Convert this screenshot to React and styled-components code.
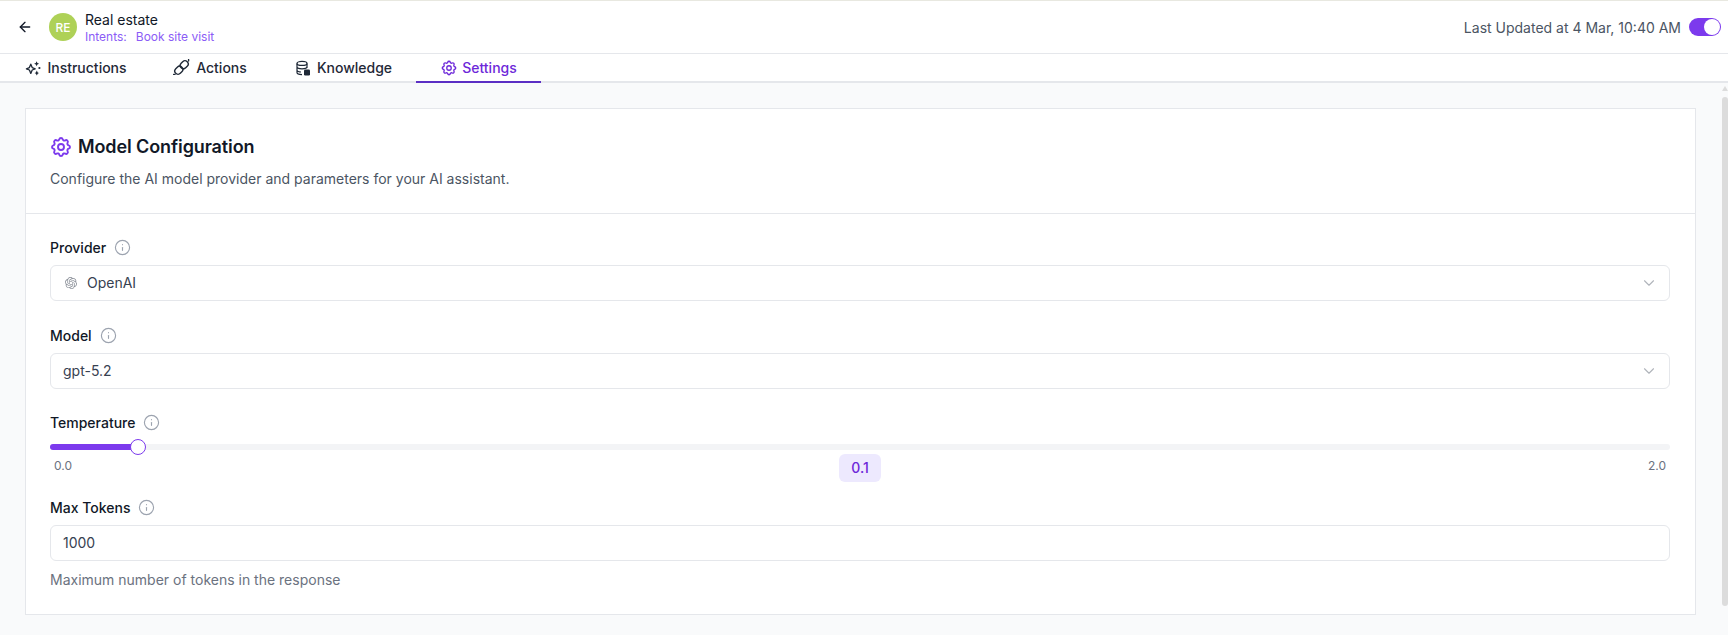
import React from "react";
import styled, { createGlobalStyle } from "styled-components";
import { TbSettings } from "react-icons/tb";
import { SiOpenai } from "react-icons/si";
import { ArrowLeft, ChevronDown, Info } from "lucide-react";

const Global = createGlobalStyle`
  html, body { margin: 0; padding: 0; height: 100%; background: #fff; overflow: hidden; }
  body { font-family: Inter, "Liberation Sans", sans-serif; color: #111827; }
  * { box-sizing: border-box; }
`;

const Page = styled.div`
  height: 635px;
  display: flex;
  flex-direction: column;
  border-top: 1px solid #e8e8e0;
`;

const TopBar = styled.header`
  height: 53px;
  flex: none;
  display: flex;
  align-items: center;
  justify-content: space-between;
  padding: 0 7px 0 17px;
  border-bottom: 1px solid #e5e7eb;
`;

const TopLeft = styled.div`
  display: flex;
  align-items: center;
`;

const BackButton = styled.button`
  border: 0;
  background: none;
  padding: 0;
  width: 16px;
  height: 16px;
  display: flex;
  color: #111827;
  margin-right: 16px;
`;

const Avatar = styled.div`
  width: 28px;
  height: 28px;
  border-radius: 50%;
  background: #aed157;
  color: #fff;
  font-size: 12px;
  font-weight: 500;
  display: flex;
  align-items: center;
  justify-content: center;
  margin-right: 8px;
`;

const TitleStack = styled.div`
  display: flex;
  flex-direction: column;
`;

const Title = styled.div`
  font-size: 14px;
  line-height: 19px;
  color: #111827;
`;

const Intents = styled.div`
  font-size: 12px;
  line-height: 16px;
  color: #8b5cf6;
  display: flex;
  gap: 9px;
`;

const TopRight = styled.div`
  display: flex;
  align-items: center;
  gap: 8px;
`;

const Updated = styled.span`
  font-size: 14px;
  color: #4b5563;
`;

const Toggle = styled.div`
  width: 32px;
  height: 18px;
  border-radius: 9px;
  background: #7c3aed;
  display: flex;
  justify-content: flex-end;
  padding: 1px;
`;

const ToggleKnob = styled.div`
  width: 16px;
  height: 16px;
  border-radius: 50%;
  background: #fff;
`;

const Tabs = styled.nav`
  height: 29px;
  flex: none;
  display: flex;
  border-bottom: 2px solid #e5e7eb;
`;

const Tab = styled.div`
  width: ${(p) => p.$w}px;
  height: 29px;
  display: flex;
  align-items: center;
  justify-content: center;
  gap: ${(p) => p.$gap ?? 6}px;
  font-size: 14px;
  font-weight: 500;
  color: ${(p) => (p.$active ? "#6d28d9" : "#1f2937")};
  border-bottom: 2px solid ${(p) => (p.$active ? "#5b2fc4" : "transparent")};
  padding-left: ${(p) => p.$pl ?? 0}px;
`;

const ScrollArea = styled.div`
  position: relative;
  flex: 1;
  min-height: 0;
`;

const Scroll = styled.main`
  height: 100%;
  background: #f9fafb;
  overflow-y: auto;
  padding: 25px 32px 39px 25px;
  &::-webkit-scrollbar { display: none; }
`;

const Rail = styled.div`
  position: absolute;
  top: 0;
  right: 0;
  width: 7px;
  display: flex;
  flex-direction: column;
  align-items: center;
  padding-top: 3px;
`;

const RailArrow = styled.div`
  width: 0;
  height: 0;
  border-left: 3px solid transparent;
  border-right: 3px solid transparent;
  border-bottom: 5px solid #dcdcdc;
`;

const RailThumb = styled.div`
  width: 6px;
  height: 509px;
  margin-top: 6px;
  border-radius: 3px;
  background: #dcdcdc;
`;

const Card = styled.section`
  background: #fff;
  border: 1px solid #e5e7eb;
`;

const CardHead = styled.div`
  height: 105px;
  padding: 26px 24px 0;
  border-bottom: 1px solid #e5e7eb;
`;

const CardTitle = styled.h2`
  margin: 0;
  display: flex;
  align-items: center;
  gap: 5px;
  font-size: 18px;
  line-height: 24px;
  font-weight: 600;
  letter-spacing: -0.1px;
  color: #111827;
  svg { color: #7c3aed; margin-left: -1px; }
`;

const CardDesc = styled.p`
  margin: 10px 0 0;
  font-size: 14px;
  line-height: 20px;
  color: #4b5563;
`;

const CardBody = styled.div`
  padding: 24px 25px 24px 24px;
`;

const Field = styled.div`
  margin-bottom: ${(p) => p.$mb || 0}px;
`;

const Label = styled.div`
  display: flex;
  align-items: center;
  gap: 8px;
  height: 20px;
  padding-bottom: 2px;
  margin-bottom: ${(p) => p.$mb ?? 7}px;
  font-size: 14px;
  font-weight: 500;
  color: #111827;
  svg { color: #9ca3af; }
`;

const Control = styled.div`
  height: 36px;
  border: 1px solid #e5e7eb;
  border-radius: 6px;
  display: flex;
  align-items: center;
  justify-content: space-between;
  padding: 0 12px 1px;
  font-size: 14px;
  color: #374151;
  background: #fff;
`;

const ControlValue = styled.span`
  display: flex;
  align-items: center;
  svg { color: #8a8f98; margin: 0 10px 0 2px; }
`;

const Chevron = styled(ChevronDown)`
  color: #b0b4bb;
  margin-right: -1px;
`;

const Track = styled.div`
  position: relative;
  height: 6px;
  border-radius: 3px;
  background: #f3f4f6;
`;

const Fill = styled.div`
  height: 100%;
  border-radius: 3px;
  background: #7c3aed;
`;

const Thumb = styled.div`
  position: absolute;
  top: -5px;
  width: 16px;
  height: 16px;
  margin-left: -8px;
  border-radius: 50%;
  background: #fff;
  border: 1.5px solid #7c3aed;
`;

const Scale = styled.div`
  display: flex;
  justify-content: space-between;
  align-items: flex-start;
  padding: 4px 4px 0;
  font-size: 12px;
  line-height: 20px;
  color: #6b7280;
`;

const ScaleEnd = styled.span`
  padding-top: 2px;
`;

const ValueBadge = styled.span`
  width: 42px;
  height: 28px;
  border-radius: 6px;
  background: #ede9fe;
  color: #6d28d9;
  font-size: 14px;
  font-weight: 500;
  display: flex;
  align-items: center;
  justify-content: center;
`;

const Helper = styled.p`
  margin: 9px 0 0;
  font-size: 14px;
  line-height: 20px;
  color: #6b7280;
`;

const IconInstructions = () => (
  <svg width="16" height="16" viewBox="0 0 16 16" fill="none" stroke="currentColor" strokeWidth="1.3" strokeLinejoin="round">
    <path d="M5.8 4.2 7.2 7.6l3 1.2-3 1.2-1.4 3.4L4.4 10l-3-1.2 3-1.2z" />
    <path d="M11.6 1.2l.8 1.7 1.7.8-1.7.8-.8 1.7-.8-1.7-1.7-.8 1.7-.8z" fill="currentColor" stroke="none" />
    <path d="M11.8 10.6l.9 1.8 1.3.7-1.3.7-.9 1.8-.9-1.8-1.3-.7 1.3-.7z" fill="currentColor" stroke="none" />
    <circle cx="14.4" cy="8" r="1.1" fill="currentColor" stroke="none" />
  </svg>
);

const IconActions = () => (
  <svg width="17" height="17" viewBox="0 0 17 17" fill="none" stroke="currentColor" strokeWidth="1.4" strokeLinecap="round">
    <rect x="1.5" y="8" width="8.6" height="6.4" rx="3.2" transform="rotate(-45 5.8 11.2)" />
    <rect x="6.9" y="2.6" width="8.6" height="6.4" rx="3.2" transform="rotate(-45 11.2 5.8)" />
    <path d="M15.6 0.6v1.4M0.6 15.4H2" />
  </svg>
);

const IconKnowledge = () => (
  <svg width="16" height="16" viewBox="0 0 16 16" fill="none" stroke="currentColor" strokeWidth="1.2">
    <ellipse cx="7" cy="3.4" rx="5" ry="2" />
    <path d="M2 3.4v9.2c0 1.1 2.2 2 5 2M2 6.8c0 1.1 2.2 2 5 2s5-.9 5-2M2 10c0 1.1 2.2 2 4 2M12 3.4V8" />
    <rect x="9" y="9.5" width="6" height="6" rx="1.2" fill="currentColor" stroke="none" />
  </svg>
);

const InfoIcon = () => <Info size={17} strokeWidth={1.6} />;

export default function App() {
  return (
    <>
      <Global />
      <Page>
        <TopBar>
          <TopLeft>
            <BackButton><ArrowLeft size={16} strokeWidth={2} /></BackButton>
            <Avatar>RE</Avatar>
            <TitleStack>
              <Title>Real estate</Title>
              <Intents><span>Intents:</span><span>Book site visit</span></Intents>
            </TitleStack>
          </TopLeft>
          <TopRight>
            <Updated>Last Updated at 4 Mar, 10:40 AM</Updated>
            <Toggle><ToggleKnob /></Toggle>
          </TopRight>
        </TopBar>
        <Tabs>
          <Tab $w={150} $pl={2}><IconInstructions />Instructions</Tab>
          <Tab $w={120}><IconActions />Actions</Tab>
          <Tab $w={146} $pl={1}><IconKnowledge />Knowledge</Tab>
          <Tab $w={125} $active $gap={4}><TbSettings size={18} strokeWidth={1.75} />Settings</Tab>
        </Tabs>
        <ScrollArea>
          <Scroll>
            <Card>
              <CardHead>
                <CardTitle><TbSettings size={24} strokeWidth={1.9} />Model Configuration</CardTitle>
                <CardDesc>Configure the AI model provider and parameters for your AI assistant.</CardDesc>
              </CardHead>
              <CardBody>
                <Field $mb={25}>
                  <Label>Provider <InfoIcon /></Label>
                  <Control>
                    <ControlValue><SiOpenai size={12} />OpenAI</ControlValue>
                    <Chevron size={18} strokeWidth={1.5} />
                  </Control>
                </Field>
                <Field $mb={24}>
                  <Label>Model <InfoIcon /></Label>
                  <Control>
                    <ControlValue>gpt-5.2</ControlValue>
                    <Chevron size={18} strokeWidth={1.5} />
                  </Control>
                </Field>
                <Field $mb={16}>
                  <Label $mb={11}>Temperature <InfoIcon /></Label>
                  <Track>
                    <Fill style={{ width: "5.45%" }} />
                    <Thumb style={{ left: "5.45%" }} />
                  </Track>
                  <Scale>
                    <ScaleEnd>0.0</ScaleEnd>
                    <ValueBadge>0.1</ValueBadge>
                    <ScaleEnd>2.0</ScaleEnd>
                  </Scale>
                </Field>
                <Field>
                  <Label>Max Tokens <InfoIcon /></Label>
                  <Control>1000</Control>
                  <Helper>Maximum number of tokens in the response</Helper>
                </Field>
              </CardBody>
            </Card>
          </Scroll>
          <Rail>
            <RailArrow />
            <RailThumb />
          </Rail>
        </ScrollArea>
      </Page>
    </>
  );
}
